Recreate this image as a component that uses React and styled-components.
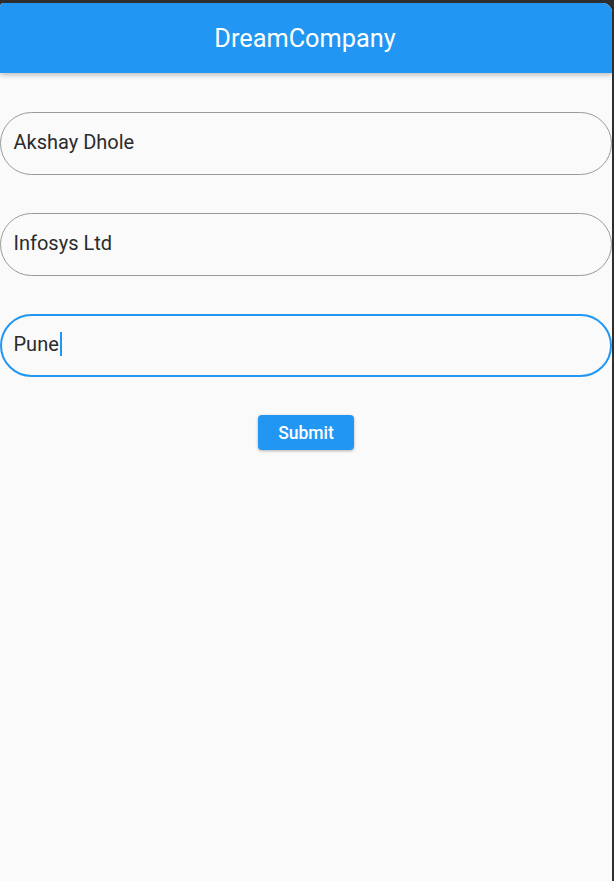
import React from "react";
import styled, { createGlobalStyle } from "styled-components";

const Global = createGlobalStyle`
  html, body { margin: 0; padding: 0; background: #2e2e2e; }
  body { font-family: Roboto, "Noto Sans", sans-serif; }
`;

const Frame = styled.div`
  margin-top: 3px;
  width: 612px;
  height: 878px;
  background: #fafafa;
  border-radius: 4px 9px 0 0;
  overflow: hidden;
  display: flex;
  flex-direction: column;
`;

const AppBar = styled.header`
  height: 70px;
  flex: 0 0 70px;
  background: #2196f3;
  display: flex;
  align-items: center;
  justify-content: center;
  box-shadow: 0 2px 5px rgba(0, 0, 0, 0.25);
  position: relative;
  z-index: 1;
`;

const Title = styled.h1`
  margin: 0 0 0 -2px;
  font-family: Roboto, sans-serif;
  font-weight: 400;
  font-size: 25.3px;
  color: #ffffff;
`;

const Form = styled.div`
  display: flex;
  flex-direction: column;
  padding-top: 39px;
  gap: 38px;
`;

const Field = styled.div`
  height: 63px;
  box-sizing: border-box;
  border-radius: 32px;
  border: ${(p) => (p.$focused ? "2.6px solid #2196f3" : "1.4px solid #9a9a9a")};
  display: flex;
  align-items: center;
  padding-left: ${(p) => (p.$focused ? "11.5px" : "12.5px")};
  padding-bottom: 3px;
  font-size: 20px;
  color: #2b2b2b;
`;

const Caret = styled.span`
  display: inline-block;
  width: 2px;
  height: 24px;
  background: #2196f3;
  margin-left: 1px;
`;

const ButtonRow = styled.div`
  display: flex;
  justify-content: center;
`;

const Button = styled.button`
  width: 96px;
  height: 35px;
  border: none;
  border-radius: 4px;
  background: #2196f3;
  color: #fff;
  font-family: Roboto, sans-serif;
  font-size: 17.5px;
  font-weight: 500;
  box-shadow: 0 1px 3px rgba(0, 0, 0, 0.3);
  padding: 0;
`;

export default function App() {
  return (
    <>
      <Global />
      <Frame>
        <AppBar>
          <Title>DreamCompany</Title>
        </AppBar>
        <Form>
          <Field>Akshay Dhole</Field>
          <Field>Infosys Ltd</Field>
          <Field $focused>
            Pune
            <Caret />
          </Field>
          <ButtonRow>
            <Button>Submit</Button>
          </ButtonRow>
        </Form>
      </Frame>
    </>
  );
}
